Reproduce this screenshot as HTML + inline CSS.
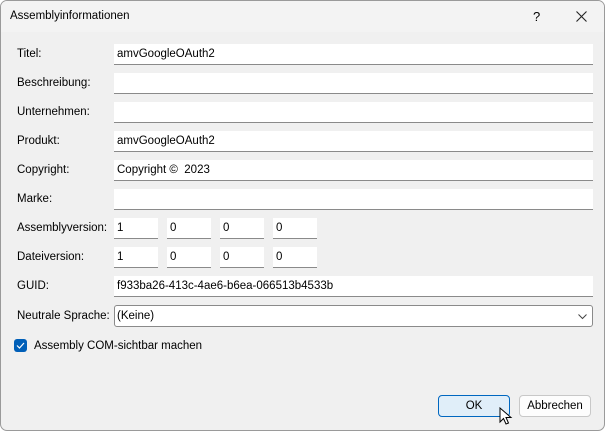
<!DOCTYPE html>
<html><head><style>
body{margin:0;width:605px;height:431px;overflow:hidden;font-family:"Liberation Sans",sans-serif;font-size:11.5px;color:#000;background:#fff}
.win{position:absolute;left:0;top:0;width:603px;height:429px;border:1px solid #9a9a9a;border-radius:7px;background:#f0f0f0;overflow:hidden}
.tb{position:absolute;left:0;top:0;width:603px;height:31px;background:#f3f3f3}
.tb .t{position:absolute;left:9px;top:9px}
.lbl{position:absolute;left:16px}
.f{position:absolute;left:113px;width:479px;height:21px;background:#fff;border-bottom:1px solid #8a8a8a;box-sizing:border-box;padding:4px 3px;line-height:13px;white-space:nowrap}
.v{width:44px}
.btn{position:absolute;top:394px;height:22px;border:1px solid #c8c8c8;border-radius:4px;background:#fdfdfd;box-sizing:border-box;text-align:center;line-height:20px}
</style></head><body>
<div class="win">
<div class="tb"><span class="t">Assemblyinformationen</span>
<span style="position:absolute;left:532px;top:8px;font-size:13px">?</span>
<svg style="position:absolute;left:575px;top:10px" width="11" height="11"><path d="M0.5 0.5L10.5 10.5M10.5 0.5L0.5 10.5" stroke="#222" stroke-width="1.1"/></svg></div>

<div class="lbl" style="top:47px">Titel:</div><div class="f" style="top:43px">amvGoogleOAuth2</div>
<div class="lbl" style="top:76px">Beschreibung:</div><div class="f" style="top:72px"></div>
<div class="lbl" style="top:105px">Unternehmen:</div><div class="f" style="top:101px"></div>
<div class="lbl" style="top:134px">Produkt:</div><div class="f" style="top:130px">amvGoogleOAuth2</div>
<div class="lbl" style="top:163px">Copyright:</div><div class="f" style="top:159px">Copyright ©&nbsp; 2023</div>
<div class="lbl" style="top:192px">Marke:</div><div class="f" style="top:188px"></div>
<div class="lbl" style="top:221px">Assemblyversion:</div>
<div class="f v" style="top:217px">1</div><div class="f v" style="top:217px;left:166px">0</div><div class="f v" style="top:217px;left:219px">0</div><div class="f v" style="top:217px;left:272px">0</div>
<div class="lbl" style="top:250px">Dateiversion:</div>
<div class="f v" style="top:246px">1</div><div class="f v" style="top:246px;left:166px">0</div><div class="f v" style="top:246px;left:219px">0</div><div class="f v" style="top:246px;left:272px">0</div>
<div class="lbl" style="top:279px">GUID:</div><div class="f" style="top:275px">f933ba26-413c-4ae6-b6ea-066513b4533b</div>
<div class="lbl" style="top:309px">Neutrale Sprache:</div>
<div class="f" style="top:304px;height:22px;border:1px solid #8a8a8a;border-radius:3px;padding:4px 2px">(Keine)
<svg style="position:absolute;right:5px;top:8px" width="9" height="6"><path d="M0.5 0.5L4.5 4.5L8.5 0.5" stroke="#444" fill="none"/></svg></div>
<div style="position:absolute;left:13px;top:338px;width:13px;height:13px;background:#005fb8;border-radius:3px"><svg width="13" height="13"><path d="M3 6.5L5.5 9L10 4" stroke="#fff" fill="none" stroke-width="1.2"/></svg></div>
<div style="position:absolute;left:33px;top:339px">Assembly COM-sichtbar machen</div>
<div class="btn" style="left:437px;width:72px;background:#e0eef9;border-color:#0067c0">OK</div>
<div class="btn" style="left:518px;width:72px">Abbrechen</div>
<svg style="position:absolute;left:498px;top:406px" width="14" height="20"><path d="M1 1L1 15L4.5 11.5L7 17L9.5 16L7 10.5L12 10.5Z" fill="#fff" stroke="#000"/></svg>
</div>
</body></html>
